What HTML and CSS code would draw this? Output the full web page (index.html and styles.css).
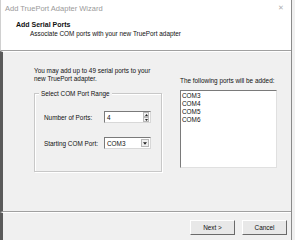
FILE: index.html
```html
<!DOCTYPE html>
<html>
<head>
<meta charset="utf-8">
<link rel="stylesheet" href="styles.css">
</head>
<body>
<div class="window">
  <div class="top">
    <div class="titlebar">
      <span class="title">Add TruePort Adapter Wizard</span>
      <span class="close">✕</span>
    </div>
    <div class="header">
      <div class="h-title">Add Serial Ports</div>
      <div class="h-sub">Associate COM ports with your new TruePort adapter</div>
    </div>
  </div>
  <div class="body">
    <div class="left">
      <p class="intro">You may add up to 49 serial ports to your<br>new TruePort adapter.</p>
      <div class="group">
        <span class="legend">Select COM Port Range</span>
        <div class="row">
          <span class="lbl">Number of Ports:</span>
          <div class="spin">
            <span class="val">4</span>
            <div class="spin-btns">
              <span class="sb"><svg width="5" height="3" viewBox="0 0 5 3"><path d="M0 3 L2.5 0 L5 3Z" fill="#222"/></svg></span>
              <span class="sb"><svg width="5" height="3" viewBox="0 0 5 3"><path d="M0 0 L2.5 3 L5 0Z" fill="#222"/></svg></span>
            </div>
          </div>
        </div>
        <div class="row">
          <span class="lbl">Starting COM Port:</span>
          <div class="combo">
            <span class="val">COM3</span>
            <span class="cb"><svg width="5" height="3" viewBox="0 0 5 3"><path d="M0 0 L2.5 3 L5 0Z" fill="#222"/></svg></span>
          </div>
        </div>
      </div>
    </div>
    <div class="right">
      <div class="list-lbl">The following ports will be added:</div>
      <div class="list">
        <div>COM3</div>
        <div>COM4</div>
        <div>COM5</div>
        <div>COM6</div>
      </div>
    </div>
  </div>
  <div class="footer">
    <button class="btn">Next &gt;</button>
    <button class="btn">Cancel</button>
  </div>
</div>
</body>
</html>
```
FILE: styles.css
```css
html, body {
  margin: 0;
  padding: 0;
  background: #f0f0f0;
}
body {
  width: 295px;
  height: 240px;
  overflow: hidden;
  font-family: "Liberation Sans", Arial, sans-serif;
  font-size: 6.4px;
  color: #111;
}
.window {
  width: 291px;
  height: 240px;
  border-right: 1px solid #8a8a8a;
  display: flex;
  flex-direction: column;
}
.top {
  background: #fff;
  height: 50px;
  border-left: 1px solid #d0d0d0;
  border-bottom: 1px solid #a0a0a0;
}
.titlebar {
  height: 16px;
  display: flex;
  align-items: center;
  justify-content: space-between;
  padding: 0 7px 0 4px;
}
.title {
  color: #9a9a9a;
  font-size: 7.5px;
}
.close {
  color: #b0b0b0;
  font-size: 7px;
}
.header {
  padding: 4px 0 0 15px;
}
.h-title {
  font-weight: bold;
  font-size: 7px;
  line-height: 9px;
}
.h-sub {
  padding-left: 14px;
  line-height: 10px;
}
.body {
  flex: 1;
  display: flex;
  border-left: 3px solid #5a5a5a;
  border-top: 1px solid #fff;
  border-bottom: 1px solid #a0a0a0;
  padding: 15px 0 0 31px;
}
.left {
  width: 128px;
}
.intro {
  margin: 0 0 10px;
  line-height: 8px;
}
.group {
  position: relative;
  height: 79px;
  border: 1px solid #c8c8c8;
  box-shadow: inset 1px 1px 0 #fff, 1px 1px 0 #fff;
  padding: 16px 0 0 9px;
  box-sizing: border-box;
}
.legend {
  position: absolute;
  top: -5px;
  left: 4px;
  background: #f0f0f0;
  padding: 0 2px;
  line-height: 9px;
}
.row {
  display: flex;
  align-items: center;
  height: 14px;
  margin-bottom: 12px;
}
.lbl {
  width: 60px;
}
.spin, .combo {
  width: 47px;
  height: 12px;
  background: #fff;
  border: 1px solid #7a7a7a;
  border-right-color: #d8d8d8;
  border-bottom-color: #d8d8d8;
  display: flex;
  align-items: center;
  justify-content: space-between;
  box-sizing: border-box;
}
.val {
  padding-left: 2px;
}
.spin-btns {
  display: flex;
  flex-direction: column;
  height: 10px;
  margin-right: 1px;
}
.sb {
  width: 6px;
  height: 5px;
  border: 1px solid #b8b8b8;
  box-sizing: border-box;
  background: #f0f0f0;
  display: flex;
  align-items: center;
  justify-content: center;
}
.sb svg { width: 3px; height: 2px; }
.cb {
  width: 8px;
  height: 8px;
  margin-right: 1px;
  border: 1px solid #b8b8b8;
  box-sizing: border-box;
  background: #f0f0f0;
  display: flex;
  align-items: center;
  justify-content: center;
}
.cb svg { width: 4px; height: 3px; }
.right {
  margin-left: 18px;
  width: 97px;
}
.list-lbl {
  white-space: nowrap;
  line-height: 8px;
  margin-top: 10px;
  margin-bottom: 5px;
}
.list {
  height: 78px;
  background: #fff;
  border: 1px solid #7a7a7a;
  border-right-color: #e0e0e0;
  border-bottom-color: #e0e0e0;
  padding: 1px 0 0 1px;
  line-height: 8px;
  box-sizing: border-box;
}
.footer {
  height: 28px;
  border-left: 3px solid #5a5a5a;
  border-top: 1px solid #fff;
  display: flex;
  justify-content: flex-end;
  align-items: flex-start;
  padding: 7px 4px 0 0;
  gap: 7px;
  box-sizing: border-box;
}
.btn {
  width: 45px;
  height: 15px;
  margin: 0;
  padding: 0;
  font-family: "Liberation Sans", Arial, sans-serif;
  font-size: 6.4px;
  color: #111;
  background: #e8e8e8;
  border: 1px solid #fff;
  border-right-color: #6a6a6a;
  border-bottom-color: #6a6a6a;
}
```
